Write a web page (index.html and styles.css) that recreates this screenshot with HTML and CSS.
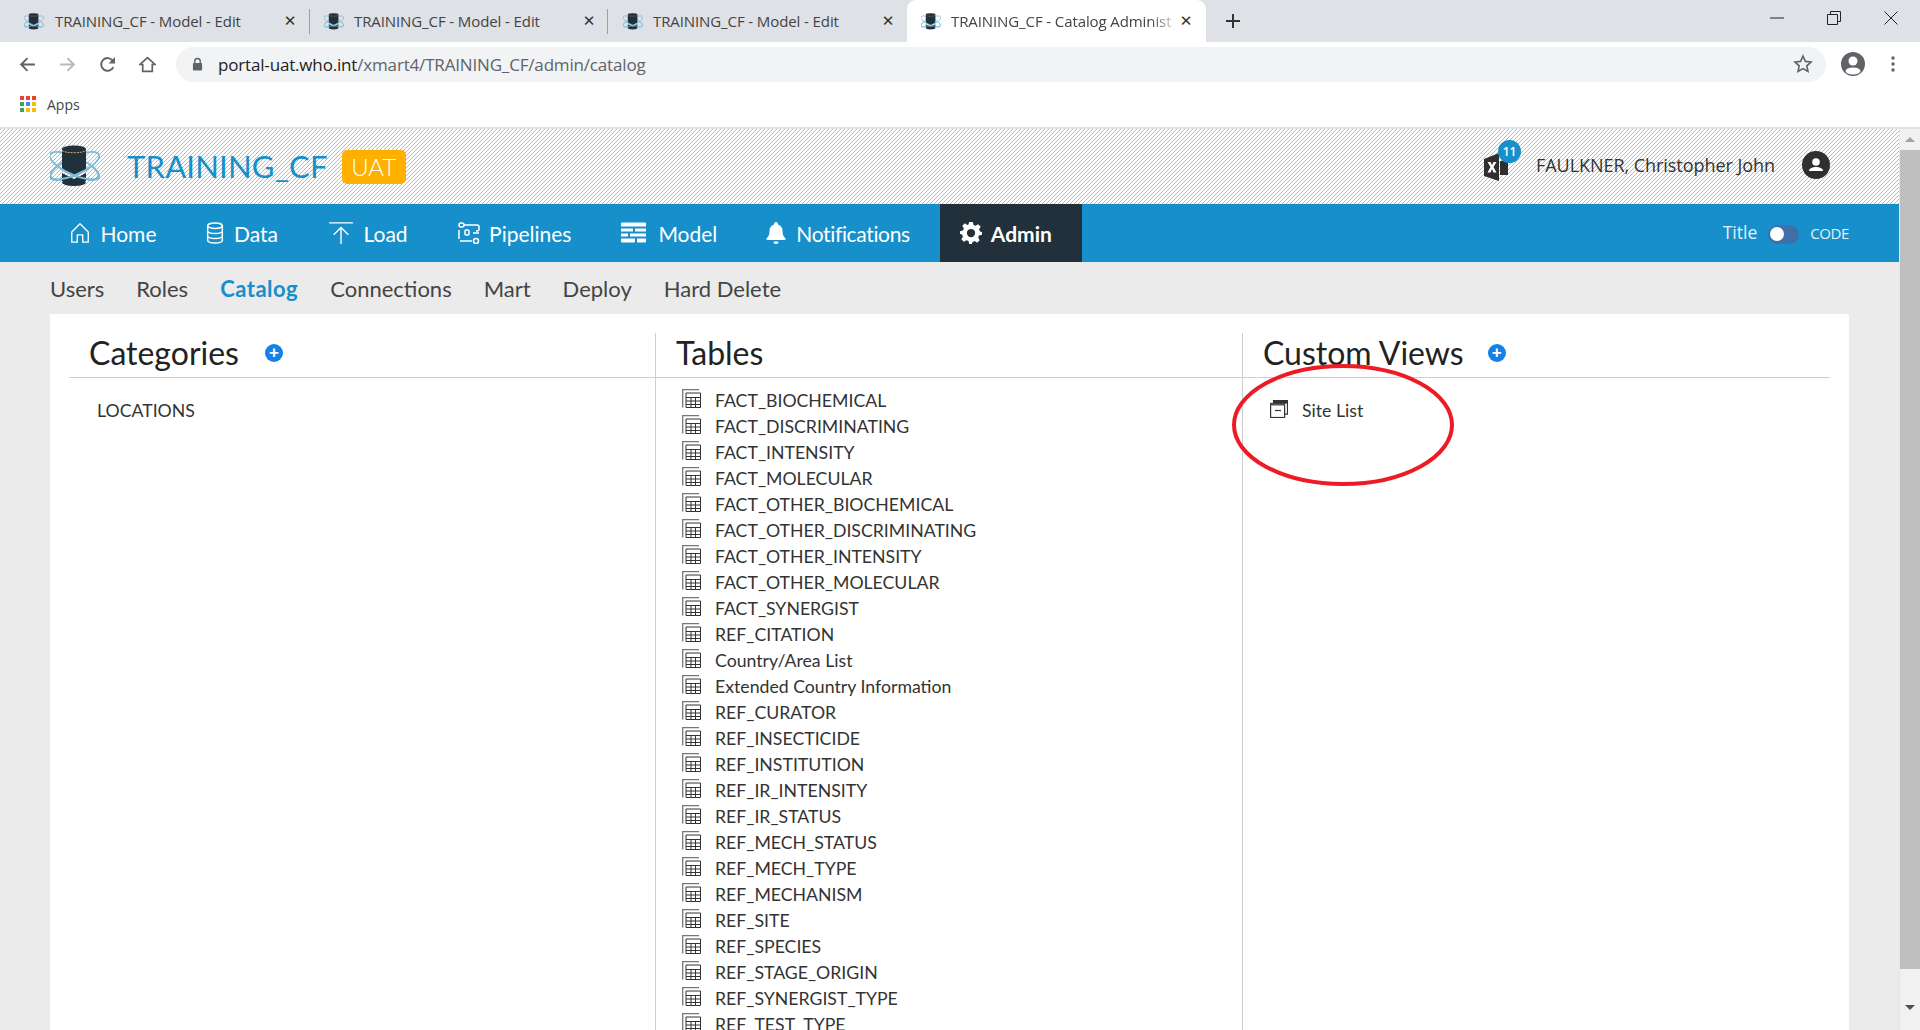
FILE: index.html
```html
<!DOCTYPE html>
<html lang="en">
<head>
<meta charset="utf-8">
<title>TRAINING_CF - Catalog Administration</title>
<link rel="stylesheet" href="styles.css">
</head>
<body>
<svg class="defs" xmlns="http://www.w3.org/2000/svg">
  <symbol id="logo" viewBox="0 0 50 42">
    <g fill="none" stroke="#7dbcd9" stroke-width="1.800">
      <ellipse cx="24.500" cy="21" rx="27" ry="9" transform="rotate(25 24.500 21)"/>
      <ellipse cx="24.500" cy="21" rx="27" ry="9" transform="rotate(-25 24.500 21)"/>
    </g>
    <ellipse cx="24" cy="4" rx="12" ry="3.500" fill="#22303c"/>
    <path d="M12 4v20l12 6 12-6V4z" fill="#22303c"/>
    <path d="M12 5.500c3 3 21 3 24 0" fill="none" stroke="#d9b46a" stroke-width="1" stroke-dasharray="2 1"/>
    <path d="M12 28l12 6 12-6v8H12z" fill="#22303c"/>
    <ellipse cx="24" cy="37.500" rx="12" ry="3.500" fill="#22303c"/>
    <g fill="none" stroke="#7dbcd9" stroke-width="1.800">
      <path d="M7.200 21A27 9 25 0 0 41.800 21"/>
      <path d="M7.200 21A27 9 -25 0 0 41.800 21"/>
    </g>
  </symbol>
  <symbol id="tbl" viewBox="0 0 19 19">
    <path d="M.7 18.500V.7H17" fill="none" stroke="#777" stroke-width="1.300"/>
    <path d="M4 4h14.500v14.500H4z" fill="#fff" stroke="#333" stroke-width="1"/>
    <path d="M4 8.500h14.500M4 12h14.500M4 15.500h14.500M9 8.500v10M13.500 8.500v10" fill="none" stroke="#333" stroke-width="1"/>
  </symbol>
</svg>

<div class="tabstrip">
  <div class="tab tab-first">
    <svg class="favicon"><use href="#logo"/></svg>
    <span class="tab-title">TRAINING_CF - Model - Edit</span>
    <span class="tab-x">✕</span>
  </div>
  <div class="tab tab-second">
    <svg class="favicon"><use href="#logo"/></svg>
    <span class="tab-title">TRAINING_CF - Model - Edit</span>
    <span class="tab-x">✕</span>
  </div>
  <div class="tab tab-last">
    <svg class="favicon"><use href="#logo"/></svg>
    <span class="tab-title">TRAINING_CF - Model - Edit</span>
    <span class="tab-x">✕</span>
  </div>
  <div class="tab tab-active">
    <svg class="favicon"><use href="#logo"/></svg>
    <span class="tab-title">TRAINING_CF - Catalog Administ</span>
    <span class="tab-x">✕</span>
  </div>
  <svg class="newtab" viewBox="0 0 16 16"><path d="M8 1v14M1 8h14" stroke="#333" stroke-width="2" fill="none"/></svg>
  <div class="winctl">
    <svg viewBox="0 0 14 14"><path d="M0 7h14" stroke="#222" fill="none"/></svg>
    <svg viewBox="0 0 14 14"><path d="M.5 3.500h10v10H.5zM3.500 3.500V.5h10v10h-3" stroke="#222" fill="none"/></svg>
    <svg viewBox="0 0 14 14"><path d="M.5.5l13 13M13.500.5l-13 13" stroke="#222" fill="none"/></svg>
  </div>
</div>

<div class="toolbar">
  <svg class="tb-ic" viewBox="0 0 16 16"><path d="M15 8H2M8 2L2 8l6 6" fill="none" stroke="#5f6368" stroke-width="1.800"/></svg>
  <svg class="tb-ic" viewBox="0 0 16 16"><path d="M1 8h13M8 2l6 6-6 6" fill="none" stroke="#b4b7bb" stroke-width="1.800"/></svg>
  <svg class="tb-ic" viewBox="0 0 16 16"><path d="M13.500 10.500A6 6 0 1 1 13 4.500" fill="none" stroke="#5f6368" stroke-width="1.800"/><path d="M15 1v6H9z" fill="#5f6368"/></svg>
  <svg class="tb-ic" viewBox="0 0 16 16"><path d="M8 1.500L1 8h2.500v6.500h9V8H15z" fill="none" stroke="#5f6368" stroke-width="1.600"/></svg>
  <div class="omnibox">
    <svg class="lock" viewBox="0 0 12 14"><path d="M3 6V4a3 3 0 0 1 6 0v2" fill="none" stroke="#5f6368" stroke-width="1.500"/><rect x="1" y="6" width="10" height="8" rx="1" fill="#5f6368"/></svg>
    <span class="url"><b>portal-uat.who.int</b>/xmart4/TRAINING_CF/admin/catalog</span>
    <svg class="star" viewBox="0 0 20 20"><path d="M10 2l2.400 5.400 5.600.6-4.200 3.800 1.200 5.700L10 14.600l-5 2.900 1.200-5.700L2 8l5.600-.6z" fill="none" stroke="#5f6368" stroke-width="1.600"/></svg>
  </div>
  <svg class="avatar" viewBox="0 0 24 24"><circle cx="12" cy="12" r="12" fill="#5f6368"/><circle cx="12" cy="9" r="4.500" fill="#fff"/><ellipse cx="12" cy="19" rx="7.500" ry="3.500" fill="#fff"/></svg>
  <svg class="kebab" viewBox="0 0 4 18"><circle cx="2" cy="3" r="1.700" fill="#5f6368"/><circle cx="2" cy="9" r="1.700" fill="#5f6368"/><circle cx="2" cy="15" r="1.700" fill="#5f6368"/></svg>
</div>

<div class="bookmarks">
  <div class="apps-grid">
    <i class="r"></i><i class="r"></i><i class="r"></i>
    <i class="g"></i><i class="b"></i><i class="y"></i>
    <i class="g"></i><i class="y"></i><i class="y"></i>
  </div>
  <span class="apps">Apps</span>
</div>

<div class="viewport">
  <div class="page">
    <header class="banner">
      <svg class="logo"><use href="#logo"/></svg>
      <span class="brand">TRAINING_CF</span>
      <span class="uat">UAT</span>
      <div class="userbox">
        <div class="excel">
          <svg class="excel-ic" viewBox="0 0 24 28"><path d="M0 6l15-6v28L0 23z" fill="#2f2f2f"/><path d="M16 8h8v14h-8z" fill="#2f2f2f"/><path d="M3.500 9h3l1.500 3 1.500-3h3l-3 5 3 5.500h-3L8 16l-1.500 3.500h-3l3-5.500z" fill="#fff"/></svg>
          <span class="badge">11</span>
        </div>
        <span class="username">FAULKNER, Christopher John</span>
        <svg class="usericon" viewBox="0 0 28 28"><circle cx="14" cy="14" r="14" fill="#2f2f2f"/><circle cx="14" cy="11" r="3.800" fill="#fff"/><path d="M7 20c0-3 4-4 7-4s7 1 7 4z" fill="#fff"/></svg>
      </div>
    </header>

    <nav class="mainnav">
      <a class="nav-item">
        <svg class="nav-ic" viewBox="0 0 22 24"><path d="M2 11L11 2l9 9v11h-6v-8H8v8H2z" fill="none" stroke="#fff" stroke-width="1.500" stroke-linejoin="round"/></svg>
        <span>Home</span>
      </a>
      <a class="nav-item">
        <svg class="nav-ic ic-data" viewBox="0 0 18 24"><g fill="none" stroke="#fff" stroke-width="1.600"><ellipse cx="9" cy="4" rx="8" ry="3"/><path d="M1 4v16c0 2 3.500 3 8 3s8-1 8-3V4M1 9.500c0 2 3.500 3 8 3s8-1 8-3M1 15c0 2 3.500 3 8 3s8-1 8-3"/></g></svg>
        <span>Data</span>
      </a>
      <a class="nav-item">
        <svg class="nav-ic ic-load" viewBox="0 0 26 24"><g fill="none" stroke="#fff" stroke-width="1.500"><path d="M0 1h26M13 24V7M5 14l8-8 8 8"/></g></svg>
        <span>Load</span>
      </a>
      <a class="nav-item">
        <svg class="nav-ic" viewBox="0 0 22 22"><g fill="none" stroke="#fff" stroke-width="1.500"><rect x="1" y="1" width="5" height="4" rx="2"/><path d="M6 3h13a2 2 0 0 1 2 2v2a2 2 0 0 1-2 2h-1"/><rect x="7" y="8" width="4" height="5" rx="1"/><path d="M2 19h12M15 11h6M1 8v9"/><circle cx="18" cy="19" r="2.500"/></g></svg>
        <span>Pipelines</span>
      </a>
      <a class="nav-item nav-model">
        <svg class="nav-ic ic-model" viewBox="0 0 25 21"><path d="M0 1a1 1 0 0 1 1-1h23a1 1 0 0 1 1 1v3H0zM0 6h12v3H0zM14 6h11v3H14zM0 11h7v3H0zM9 11h16v3H9zM0 16h14v3a1 1 0 0 1-1 1H1a1 1 0 0 1-1-1zM16 16h9v3a1 1 0 0 1-1 1h-8z" fill="#fff"/></svg>
        <span>Model</span>
      </a>
      <a class="nav-item nav-notif">
        <svg class="nav-ic" viewBox="0 0 20 22"><path d="M10 0a2 2 0 0 1 2 2v.500c3 1 4.500 3.500 4.500 6.500 0 4 1 5.500 3 7.500v1.500H.5v-1.500c2-2 3-3.500 3-7.500 0-3 1.500-5.500 4.500-6.500V2a2 2 0 0 1 2-2zM7.500 19.500h5a2.500 2.500 0 0 1-5 0z" fill="#fff"/></svg>
        <span>Notifications</span>
      </a>
      <a class="nav-item nav-active">
        <svg class="nav-ic" viewBox="0 0 24 24"><path fill-rule="evenodd" d="M10 0h4l.7 3.200 2.300 1L19.800 2.500l2.800 2.800L20.800 8l1 2.300L24 11v3l-3.200.7-1 2.300 1.700 2.800-2.800 2.800-2.700-1.800-2.300 1L13 24h-3l-.7-3.200-2.300-1-2.800 1.700-2.800-2.800L3.200 16l-1-2.300L0 13v-3l3.200-.7 1-2.300L2.500 4.200l2.800-2.800L8 3.200l1.300-.4zM12 7.500a4.500 4.500 0 1 0 0 9 4.500 4.500 0 0 0 0-9z" fill="#fff"/></svg>
        <span>Admin</span>
      </a>
      <div class="titlemode">
        <span class="tm-title">Title</span>
        <span class="toggle"><i></i></span>
        <span class="tm-code">CODE</span>
      </div>
    </nav>

    <nav class="subnav">
      <a>Users</a>
      <a>Roles</a>
      <a class="sub-active">Catalog</a>
      <a>Connections</a>
      <a>Mart</a>
      <a>Deploy</a>
      <a>Hard Delete</a>
    </nav>

    <main class="card">
      <section class="col col-first">
        <div class="col-head"><h2>Categories</h2><span class="plus">+</span></div>
        <ul class="plain-list"><li class="cat">LOCATIONS</li></ul>
      </section>

      <section class="col col-line">
        <div class="col-head"><h2>Tables</h2></div>
        <ul class="tables">
          <li><svg class="ti"><use href="#tbl"/></svg>FACT_BIOCHEMICAL</li>
          <li><svg class="ti"><use href="#tbl"/></svg>FACT_DISCRIMINATING</li>
          <li><svg class="ti"><use href="#tbl"/></svg>FACT_INTENSITY</li>
          <li><svg class="ti"><use href="#tbl"/></svg>FACT_MOLECULAR</li>
          <li><svg class="ti"><use href="#tbl"/></svg>FACT_OTHER_BIOCHEMICAL</li>
          <li><svg class="ti"><use href="#tbl"/></svg>FACT_OTHER_DISCRIMINATING</li>
          <li><svg class="ti"><use href="#tbl"/></svg>FACT_OTHER_INTENSITY</li>
          <li><svg class="ti"><use href="#tbl"/></svg>FACT_OTHER_MOLECULAR</li>
          <li><svg class="ti"><use href="#tbl"/></svg>FACT_SYNERGIST</li>
          <li><svg class="ti"><use href="#tbl"/></svg>REF_CITATION</li>
          <li><svg class="ti"><use href="#tbl"/></svg>Country/Area List</li>
          <li><svg class="ti"><use href="#tbl"/></svg>Extended Country Information</li>
          <li><svg class="ti"><use href="#tbl"/></svg>REF_CURATOR</li>
          <li><svg class="ti"><use href="#tbl"/></svg>REF_INSECTICIDE</li>
          <li><svg class="ti"><use href="#tbl"/></svg>REF_INSTITUTION</li>
          <li><svg class="ti"><use href="#tbl"/></svg>REF_IR_INTENSITY</li>
          <li><svg class="ti"><use href="#tbl"/></svg>REF_IR_STATUS</li>
          <li><svg class="ti"><use href="#tbl"/></svg>REF_MECH_STATUS</li>
          <li><svg class="ti"><use href="#tbl"/></svg>REF_MECH_TYPE</li>
          <li><svg class="ti"><use href="#tbl"/></svg>REF_MECHANISM</li>
          <li><svg class="ti"><use href="#tbl"/></svg>REF_SITE</li>
          <li><svg class="ti"><use href="#tbl"/></svg>REF_SPECIES</li>
          <li><svg class="ti"><use href="#tbl"/></svg>REF_STAGE_ORIGIN</li>
          <li><svg class="ti"><use href="#tbl"/></svg>REF_SYNERGIST_TYPE</li>
          <li><svg class="ti"><use href="#tbl"/></svg>REF_TEST_TYPE</li>
        </ul>
      </section>

      <section class="col col-line col-views">
        <div class="col-head"><h2>Custom Views</h2><span class="plus">+</span></div>
        <ul class="plain-list">
          <li class="view">
            <svg class="vi" viewBox="0 0 18 18"><g fill="none" stroke="#333" stroke-width="1.200"><path d="M3.500 3.500V.6h14v13.500h-3"/><rect x=".6" y="3.500" width="14" height="14"/><path d="M5 10.500h6"/></g><path d="M3.500 .6h14v3h-14z" fill="#333"/><path d="M.6 3.500h14v2h-14z" fill="#555"/></svg>
            Site List
          </li>
        </ul>
        <svg class="circle" viewBox="0 0 224 126"><ellipse cx="112" cy="63" rx="109" ry="59" fill="none" stroke="#ed1c24" stroke-width="4"/></svg>
      </section>
    </main>
  </div>

  <div class="scrollbar">
    <span class="sb-up"></span>
    <span class="sb-thumb"></span>
    <span class="sb-down"></span>
  </div>
</div>
</body>
</html>
```
FILE: styles.css
```css
* { box-sizing: border-box; }
html, body { margin: 0; height: 1030px; overflow: hidden; }
body { display: flex; flex-direction: column; background: #fff; font-family: "Open Sans", "Liberation Sans", sans-serif; color: #333; }
.defs { display: none; }
ul { list-style: none; margin: 0; padding: 0; }

.tabstrip { height: 42px; background: #dee1e6; display: flex; align-items: center; flex: none; }
.tab { width: 299px; height: 42px; display: flex; align-items: center; padding-left: 14px; position: relative; flex: none; }
.tab-first { width: 310px; padding-left: 24px; }
.tab-first .tab-title { padding-left: 11px; width: 239px; }
.tab-second { width: 298px; }
.tab-last { padding-left: 15px; }
.tab::after { content: ""; position: absolute; right: 0; top: 9px; height: 25px; width: 1px; background: #9aa0a6; }
.tab-last::after, .tab-active::after { display: none; }
.tab-active { background: #fff; border-radius: 9px 9px 0 0; }
.favicon { width: 20px; height: 17px; flex: none; }
.tab-title { padding-left: 10px; width: 238px; font-size: 15px; color: #444; white-space: nowrap; overflow: hidden; letter-spacing: -.1px; }
.tab-active .tab-title { -webkit-mask-image: linear-gradient(90deg, #000 88%, transparent); mask-image: linear-gradient(90deg, #000 88%, transparent); }
.tab-x { font-size: 15px; color: #333; width: 14px; text-align: center; font-family: "DejaVu Sans", sans-serif; font-weight: 700; }
.newtab { width: 16px; height: 16px; margin-left: 19px; flex: none; }
.winctl { margin-left: auto; display: flex; gap: 43px; padding-right: 22px; }
.winctl svg { width: 14px; height: 14px; display: block; margin-top: -6px; }

.toolbar { height: 44px; display: flex; align-items: center; padding-left: 19px; flex: none; background: #fff; }
.tb-ic { width: 17px; height: 17px; margin-right: 23px; flex: none; }
.tb-ic:nth-child(4) { margin-right: 0; }
.omnibox { width: 1650px; height: 35px; margin-left: 20px; background: #f1f3f4; border-radius: 18px; display: flex; align-items: center; padding: 0 13px 0 16px; }
.lock { width: 11px; height: 14px; flex: none; }
.url { margin-left: 15px; font-size: 17px; color: #5f6368; white-space: nowrap; letter-spacing: -.17px; }
.url b { font-weight: 400; color: #222; }
.star { width: 20px; height: 20px; margin-left: auto; }
.avatar { width: 24px; height: 24px; margin-left: 15px; flex: none; }
.kebab { width: 4px; height: 18px; margin-left: 26px; flex: none; }

.bookmarks { height: 41px; display: flex; align-items: center; padding: 0 0 5px 20px; flex: none; background: #fff; }
.apps-grid { display: grid; grid-template-columns: repeat(3, 4px); grid-auto-rows: 4px; gap: 2px; }
.apps-grid i { display: block; }
.apps-grid .r { background: #ea4335; }
.apps-grid .g { background: #34a853; }
.apps-grid .b { background: #4285f4; }
.apps-grid .y { background: #fbbc05; }
.apps { margin-left: 11px; font-size: 14px; color: #444; }

.viewport { flex: 1; min-height: 0; display: flex; border-top: 2px solid #dee1e6; }
.page { flex: 1; min-width: 0; background: #ebebeb; overflow: hidden; font-family: Lato, "Liberation Sans", sans-serif; }

.banner { height: 75px; display: flex; align-items: center; padding-left: 50px; background-color: #fff; background-image: linear-gradient(135deg, #fbb316 20%, #fff 20%, #fff 50%, #fbb316 50%, #fbb316 70%, #fff 70%); background-size: 4px 4px; }
.logo { width: 50px; height: 42px; flex: none; margin-top: -1px; }
.brand { margin-left: 27px; margin-top: -2px; font-size: 31px; font-weight: 400; color: #178fca; letter-spacing: .2px; }
.uat { margin-left: 14px; width: 64px; height: 34px; line-height: 34px; text-align: center; background: #ffb000; border-radius: 5px; color: #fff; font-size: 24px; font-weight: 300; }
.userbox { margin-left: auto; display: flex; align-items: center; padding-right: 69px; }
.excel { position: relative; width: 24px; height: 28px; margin-right: 28px; }
.excel-ic { width: 24px; height: 28px; display: block; }
.badge { position: absolute; left: 14px; top: -13px; width: 23px; height: 23px; border-radius: 50%; background: #178fca; color: #fff; font-size: 12px; line-height: 23px; text-align: center; font-family: "Open Sans", sans-serif; font-weight: 600; }
.username { font-family: "Open Sans", sans-serif; font-size: 18px; color: #333; letter-spacing: -.05px; margin-top: -3px; }
.usericon { width: 28px; height: 28px; margin-left: 27px; margin-top: -3px; flex: none; }

.mainnav { height: 58px; background: #178fca; display: flex; align-items: center; padding-left: 44px; padding-right: 50px; color: #fff; }
.nav-item { height: 58px; display: flex; align-items: center; padding: 0 25px; font-size: 21px; gap: 9.500px; }
.nav-model { gap: 12px; padding-right: 22.500px; }
.nav-notif { letter-spacing: -.35px; }
.nav-ic { width: 22px; height: 22px; flex: none; }
.ic-data { width: 18px; }
.ic-load { width: 26px; }
.ic-model { width: 25px; }
.nav-active { background: #22303c; font-weight: 700; margin-left: 5px; padding: 0 30px 0 20px; gap: 9px; }
.titlemode { margin-left: auto; display: flex; align-items: center; color: #e3f1f8; }
.tm-title { font-family: "Open Sans", sans-serif; font-size: 17.500px; margin-right: 11px; margin-top: -3px; }
.toggle { width: 31px; height: 19px; border-radius: 10px; background: #3f6fa8; display: flex; align-items: center; padding-left: 2px; margin-top: 2px; }
.toggle i { width: 14px; height: 14px; background: #fff; border-radius: 50%; display: block; }
.tm-code { font-size: 15px; margin-left: 11px; font-family: "Open Sans", sans-serif; letter-spacing: -.4px; }

.subnav { height: 52px; display: flex; align-items: center; padding: 0 0 0 50px; gap: 32px; font-size: 22px; color: #444; }
.sub-active { color: #178fca; font-weight: 700; letter-spacing: .5px; }

.card { margin: 0 50px; height: 800px; background: #fff; padding: 19px 19px 0; display: flex; color: #333; }
.col { width: 587px; flex: none; }
.col-first { width: 586px; }
.col-first .col-head { gap: 26px; }
.col-line { border-left: 1px solid #cfcfcf; }
.col-views { position: relative; width: 588px; }
.col-head { height: 45px; border-bottom: 1px solid #cfcfcf; display: flex; align-items: center; padding: 0 0 4px 20px; gap: 24px; }
h2 { margin: 0; font-size: 32px; font-weight: 400; color: #222; line-height: 1; }
.plus { width: 18px; height: 18px; border-radius: 50%; background: #1580e6; color: #fff; font-size: 17px; line-height: 17px; text-align: center; font-weight: 700; font-family: "Liberation Sans", sans-serif; }
.plain-list { padding-top: 19px; }
.cat { height: 26px; line-height: 28px; padding-left: 28px; font-size: 17.700px; }
.view { height: 26px; display: flex; align-items: center; padding-left: 27px; font-size: 17.700px; gap: 14px; }
.vi { width: 18px; height: 18px; flex: none; margin-top: -2px; }
.tables { padding: 9px 0 0 26px; }
.tables li { height: 26px; display: flex; align-items: center; font-size: 17.700px; gap: 14px; white-space: nowrap; }
.ti { width: 19px; height: 19px; flex: none; margin-top: -3px; }
.circle { position: absolute; left: -12px; top: 29px; width: 224px; height: 126px; pointer-events: none; }

.scrollbar { width: 21px; flex: none; background: #f1f1f1; display: flex; flex-direction: column; align-items: center; border-left: 1px solid #e6e6e6; }
.sb-up, .sb-down { width: 0; height: 0; border-left: 5px solid transparent; border-right: 5px solid transparent; }
.sb-up { border-bottom: 5px solid #a3a3a3; margin-top: 8px; }
.sb-thumb { width: 100%; height: 819px; margin-top: 8px; background: #bfbfbf; }
.sb-down { border-top: 5px solid #505050; margin-top: 36px; }
```
